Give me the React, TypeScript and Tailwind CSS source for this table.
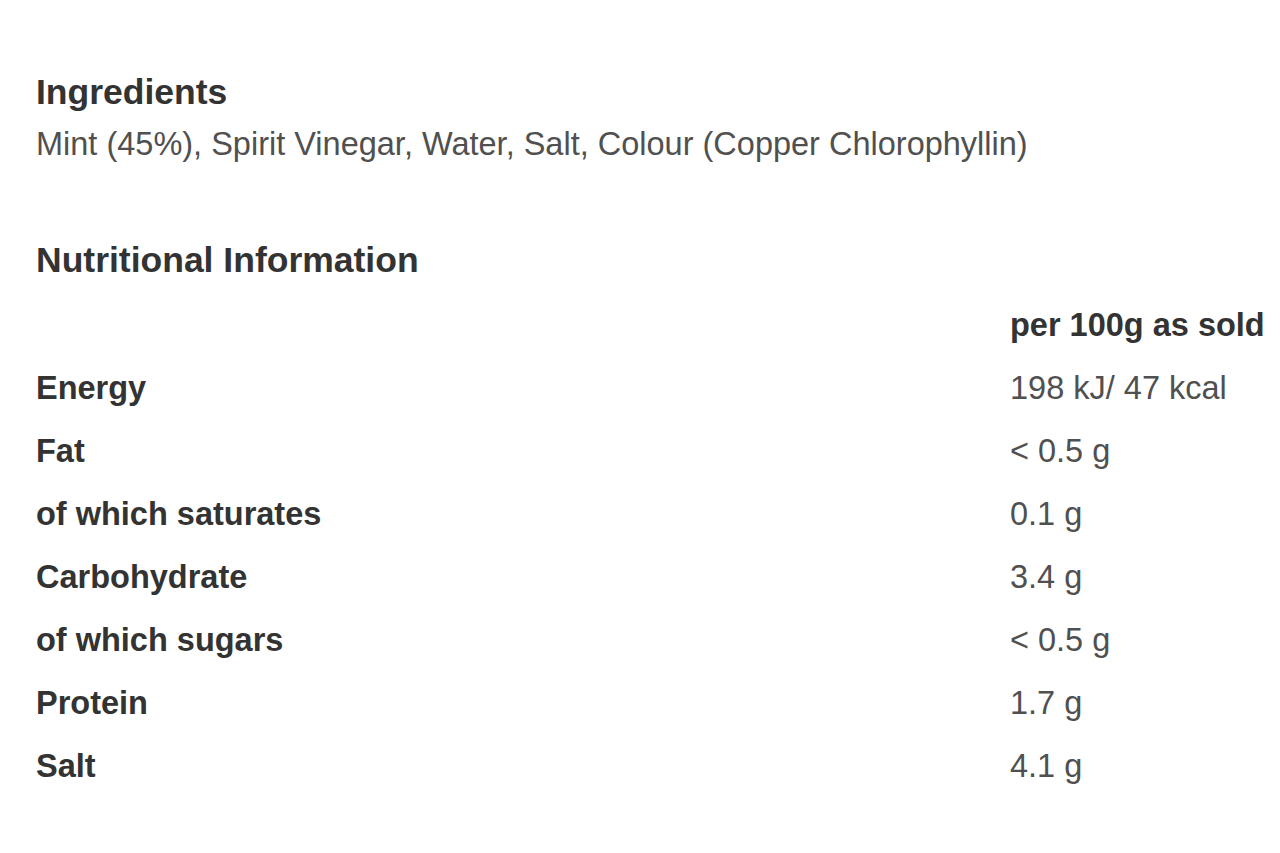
import React from "react";

const rows = [
  { label: "Energy", value: "198 kJ/ 47 kcal" },
  { label: "Fat", value: "< 0.5 g" },
  { label: "of which saturates", value: "0.1 g" },
  { label: "Carbohydrate", value: "3.4 g" },
  { label: "of which sugars", value: "< 0.5 g" },
  { label: "Protein", value: "1.7 g" },
  { label: "Salt", value: "4.1 g" },
];

const App = () => {
  return (
    <div
      className="min-h-[853px] bg-white px-[36px] pt-[72px] text-[#333]"
      style={{ fontFamily: '"Liberation Sans", Arial, sans-serif' }}
    >
      <h2 className="text-[35.5px] leading-[40px] font-bold">Ingredients</h2>
      <p className="mt-[12px] text-[32.5px] leading-[40px] text-[#505050]">
        Mint (45%), Spirit Vinegar, Water, Salt, Colour (Copper Chlorophyllin)
      </p>

      <h2 className="mt-[76px] text-[35.5px] leading-[40px] font-bold">Nutritional Information</h2>

      <div className="mt-[14px] grid grid-cols-[974px_auto] whitespace-nowrap text-[32.5px] leading-[63px]">
        <div />
        <div className="font-bold">per 100g as sold</div>
        {rows.map((r) => (
          <React.Fragment key={r.label}>
            <div className="font-bold">{r.label}</div>
            <div className="text-[#505050]">{r.value}</div>
          </React.Fragment>
        ))}
      </div>
    </div>
  );
};

export default App;
